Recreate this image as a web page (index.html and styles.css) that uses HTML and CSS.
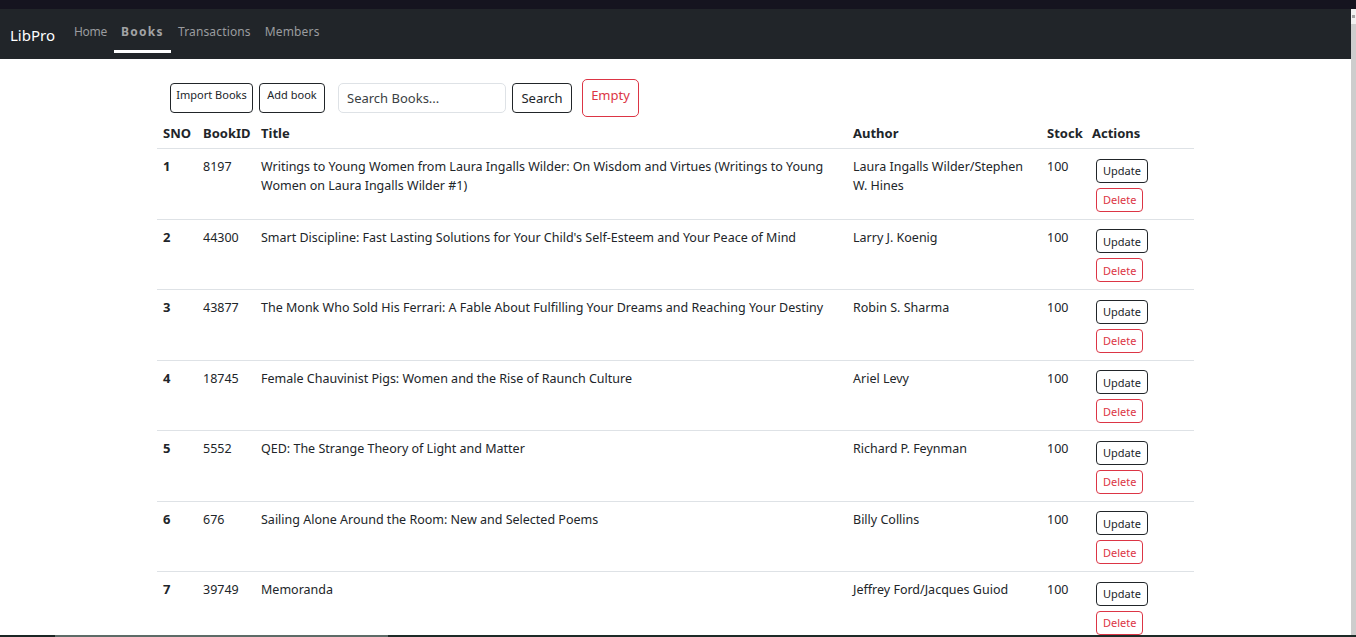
FILE: index.html
```html
<!DOCTYPE html>
<html lang="en">
<head>
<meta charset="utf-8">
<title>LibPro - Books</title>
<link rel="stylesheet" href="styles.css">
</head>
<body>
<div class="chrome"></div>
<div class="viewport">
  <div class="page">
    <nav class="navbar">
      <a class="brand" href="#">LibPro</a>
      <a class="nav-link nav-home" href="#">Home</a>
      <a class="nav-link active" href="#">Books</a>
      <a class="nav-link" href="#">Transactions</a>
      <a class="nav-link" href="#">Members</a>
    </nav>
    <main class="content">
      <div class="toolbar">
        <button class="btn btn-small btn-import">Import Books</button>
        <button class="btn btn-small btn-add">Add book</button>
        <form class="search">
          <input class="search-input" type="text" placeholder="Search Books...">
          <button class="btn btn-search" type="button">Search</button>
        </form>
        <button class="btn btn-empty">Empty</button>
      </div>
      <table class="books">
        <colgroup>
          <col class="c-sno"><col class="c-id"><col class="c-title"><col class="c-author"><col class="c-stock"><col class="c-actions">
        </colgroup>
        <thead>
          <tr><th>SNO</th><th>BookID</th><th>Title</th><th>Author</th><th>Stock</th><th>Actions</th></tr>
        </thead>
        <tbody>
          <tr><th>1</th><td>8197</td><td>Writings to Young Women from Laura Ingalls Wilder: On Wisdom and Virtues (Writings to Young Women on Laura Ingalls Wilder #1)</td><td>Laura Ingalls Wilder/Stephen W. Hines</td><td>100</td><td class="actions"><button class="btn btn-update">Update</button><button class="btn btn-delete">Delete</button></td></tr>
          <tr><th>2</th><td>44300</td><td>Smart Discipline: Fast Lasting Solutions for Your Child's Self-Esteem and Your Peace of Mind</td><td>Larry J. Koenig</td><td>100</td><td class="actions"><button class="btn btn-update">Update</button><button class="btn btn-delete">Delete</button></td></tr>
          <tr><th>3</th><td>43877</td><td>The Monk Who Sold His Ferrari: A Fable About Fulfilling Your Dreams and Reaching Your Destiny</td><td>Robin S. Sharma</td><td>100</td><td class="actions"><button class="btn btn-update">Update</button><button class="btn btn-delete">Delete</button></td></tr>
          <tr><th>4</th><td>18745</td><td>Female Chauvinist Pigs: Women and the Rise of Raunch Culture</td><td>Ariel Levy</td><td>100</td><td class="actions"><button class="btn btn-update">Update</button><button class="btn btn-delete">Delete</button></td></tr>
          <tr><th>5</th><td>5552</td><td>QED: The Strange Theory of Light and Matter</td><td>Richard P. Feynman</td><td>100</td><td class="actions"><button class="btn btn-update">Update</button><button class="btn btn-delete">Delete</button></td></tr>
          <tr><th>6</th><td>676</td><td>Sailing Alone Around the Room: New and Selected Poems</td><td>Billy Collins</td><td>100</td><td class="actions"><button class="btn btn-update">Update</button><button class="btn btn-delete">Delete</button></td></tr>
          <tr><th>7</th><td>39749</td><td>Memoranda</td><td>Jeffrey Ford/Jacques Guiod</td><td>100</td><td class="actions"><button class="btn btn-update">Update</button><button class="btn btn-delete">Delete</button></td></tr>
        </tbody>
      </table>
    </main>
  </div>
  <div class="scrollbar">
    <div class="scroll-btn"><span class="scroll-arrow"></span></div>
    <div class="scroll-thumb"></div>
  </div>
</div>
<div class="taskbar"><span class="task-a"></span><span class="task-b"></span><span class="task-c"></span></div>
</body>
</html>
```

FILE: styles.css
```css
* { box-sizing: border-box; }

html, body {
  margin: 0;
  padding: 0;
  height: 637px;
  overflow: hidden;
  background: #ffffff;
}

body {
  font-family: "Noto Sans", "Open Sans", sans-serif;
  color: #212529;
}

.chrome {
  height: 9px;
  background: #15141f;
}

.viewport {
  display: flex;
  height: 628px;
}

.page {
  flex: 1;
  min-width: 0;
  overflow: hidden;
}

.scrollbar {
  width: 5px;
  display: flex;
  flex-direction: column;
}

.scroll-btn {
  height: 15px;
  background: #f1f1f1;
  display: flex;
  align-items: center;
  justify-content: center;
}

.scroll-arrow {
  width: 3px;
  height: 3px;
  background: #a3a3a3;
}

.scroll-thumb {
  flex: 1;
  background: #cdcdcd;
}

/* Navbar */
.navbar {
  height: 50px;
  background: #212529;
  display: flex;
  align-items: stretch;
  padding-left: 10px;
}

.brand {
  color: #ffffff;
  text-decoration: none;
  font-size: 15px;
  display: flex;
  align-items: center;
  padding-top: 2px;
  margin-right: 12px;
}

.nav-link {
  color: #9a9c9f;
  text-decoration: none;
  font-size: 12px;
  padding: 14px 7px 0;
  border-bottom: 3px solid transparent;
  height: 44px;
  letter-spacing: 0.15px;
}

.nav-home {
  letter-spacing: -0.3px;
}

.nav-link.active {
  font-weight: 700;
  color: #a2a3a5;
  border-bottom-color: #ffffff;
  letter-spacing: 1.3px;
}

/* Content */
.content {
  width: 1037px;
  margin: 0 auto;
}

.toolbar {
  display: flex;
  align-items: flex-start;
  padding: 20px 0 0 13px;
  height: 58px;
}

.btn {
  font-family: inherit;
  background: #ffffff;
  border: 1px solid #212529;
  border-radius: 4px;
  color: #212529;
  cursor: pointer;
  line-height: 1;
}

.btn-small {
  margin-top: 4px;
  height: 30px;
  font-size: 11px;
  padding: 0 0 8px;
}

.btn-import {
  width: 83px;
  margin-right: 6px;
}

.btn-add {
  width: 66px;
  margin-right: 13px;
}

.search {
  display: flex;
  margin: 4px 0 0;
}

.search-input {
  width: 168px;
  height: 30px;
  border: 1px solid #dee2e6;
  border-radius: 5px;
  font-family: inherit;
  font-size: 13px;
  padding: 0 8px;
  color: #212529;
}

.search-input::placeholder {
  color: #3b3f44;
}

.btn-search {
  margin-left: 6px;
  height: 30px;
  width: 60px;
  font-size: 13px;
  padding: 0;
}

.btn-empty {
  margin-left: 10px;
  height: 38px;
  width: 57px;
  font-size: 13px;
  padding: 0 0 6px;
  border-color: #dc3545;
  color: #dc3545;
  border-radius: 5px;
}

/* Table */
.books {
  width: 1037px;
  border-collapse: collapse;
  table-layout: fixed;
  font-size: 12.5px;
  line-height: 19px;
}

.c-sno { width: 40px; }
.c-id { width: 58px; }
.c-title { width: 592px; }
.c-author { width: 194px; }
.c-stock { width: 45px; }
.c-actions { width: 108px; }

.books th,
.books td {
  text-align: left;
  vertical-align: top;
  padding: 8px 6px 6px;
  border-bottom: 1px solid #dee2e6;
}

.books thead th {
  font-weight: 700;
  font-size: 13px;
  padding: 7px 6px 5px;
}

.books tbody th {
  font-weight: 700;
  font-size: 13px;
}

.books td.actions {
  padding-top: 7px;
  padding-bottom: 7px;
}

.btn-update,
.btn-delete {
  display: block;
  font-size: 11px;
  height: 24px;
  padding: 0 6px;
  margin-left: 4px;
}

.btn-update {
  margin-top: 2.5px;
}

.btn-delete {
  margin-top: 5px;
  border-color: #dc3545;
  color: #dc3545;
}

/* Taskbar edge */
.taskbar {
  position: fixed;
  left: 0;
  right: 0;
  bottom: 0;
  height: 2px;
  display: flex;
  background: #1d2a27;
}

.task-a { width: 55px; background: #1b2624; }
.task-b { width: 333px; background: #5d6b67; }
.task-c { flex: 1; background: #1d2a27; }
```
